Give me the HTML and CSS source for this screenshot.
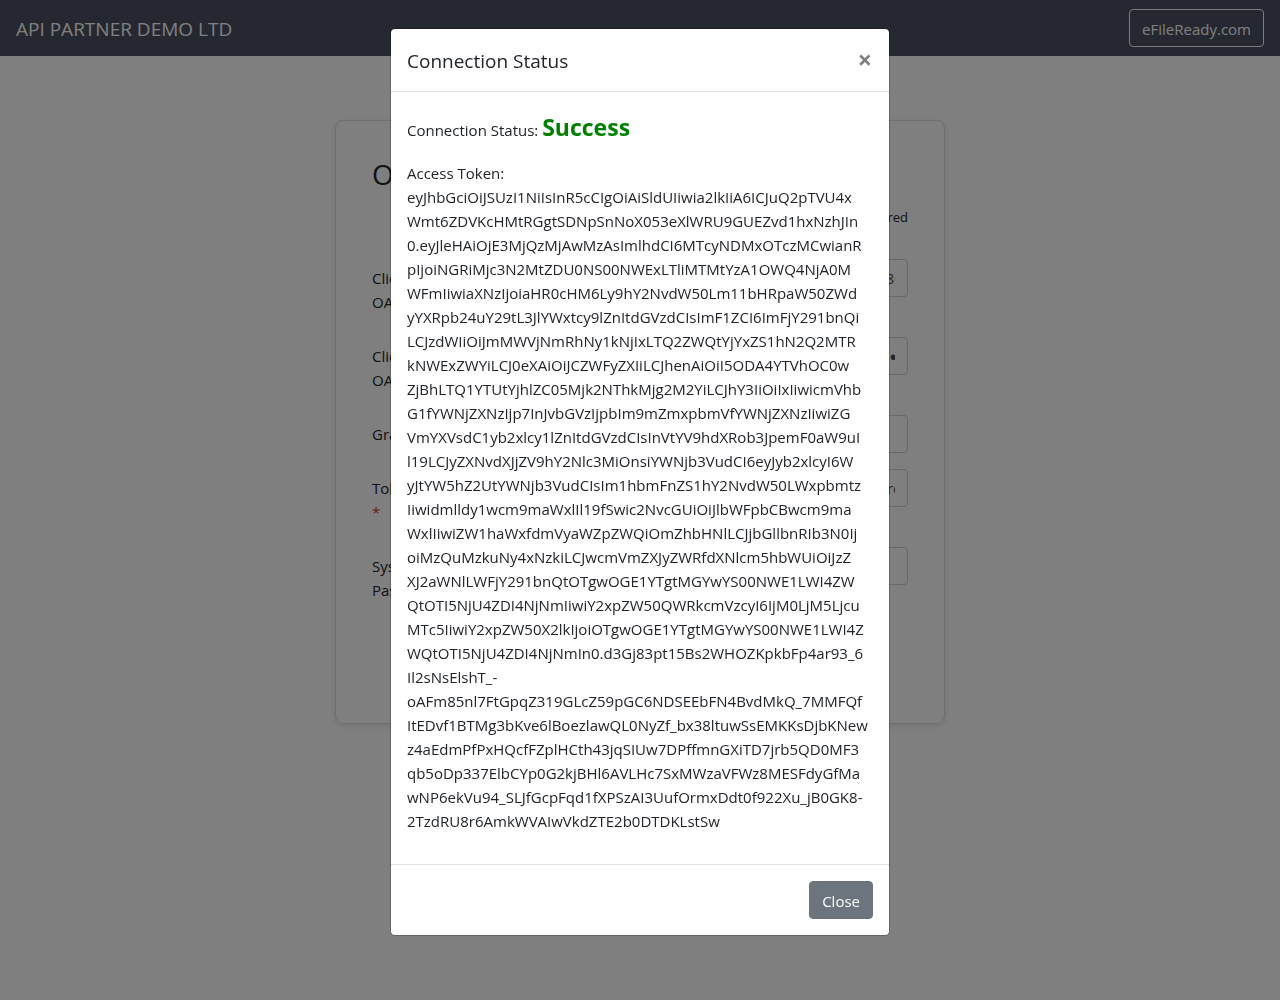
FILE: index.html
```html
<!DOCTYPE html>
<html lang="en">
<head>
    <meta charset="UTF-8">
    <meta name="viewport" content="width=device-width, initial-scale=1">
    <title>API PARTNER DEMO LTD</title>
    <link rel="stylesheet" href="styles.css">
</head>
<body>
    <nav class="navbar">
        <a class="navbar-brand" href="#">API PARTNER DEMO LTD</a>
        <a class="btn btn-outline" href="#">eFileReady.com</a>
    </nav>

    <main class="card">
        <h1>OAuth2 Connection</h1>
        <p class="required-note"><span class="required">*</span> Required</p>
        <form>
            <div class="form-row">
                <label for="clientId">Client ID from<br>OAuth2 <span class="required">*</span></label>
                <input type="text" id="clientId" value="9808a5a8-0f0a-45a5-b8ed-9296586f2018086804">
            </div>
            <div class="form-row">
                <label for="clientSecret">Client Secret from<br>OAuth2 <span class="required">*</span></label>
                <input type="password" id="clientSecret" value="9808a5a80f0a45a5b8ed929658698463f4c1d2e7a9b09808a5a80f0a45a5b8ed9296">
            </div>
            <div class="form-row">
                <label for="grantType">Grant Type <span class="required">*</span></label>
                <input type="text" id="grantType" value="client_credentials">
            </div>
            <div class="form-row">
                <label for="tokenUrl">Token Endpoint URL<br><span class="required">*</span></label>
                <input type="text" id="tokenUrl" value="https://access.multiple-integration.com/efile/rest">
            </div>
            <div class="form-row">
                <label for="systemPassword">System Account<br>Password</label>
                <input type="password" id="systemPassword">
            </div>
            <div class="form-actions">
                <button type="button" class="btn btn-secondary">Test Connection</button>
            </div>
        </form>
    </main>

    <div class="backdrop"></div>
    <div class="modal" role="dialog" aria-modal="true" aria-labelledby="modalTitle">
        <div class="modal-header">
            <h2 id="modalTitle">Connection Status</h2>
            <button type="button" class="close" aria-label="Dismiss">&times;</button>
        </div>
        <div class="modal-body">
            <p>Connection Status: <b class="success">Success</b></p>
            <p>Access Token:<br>
                eyJhbGciOiJSUzI1NiIsInR5cCIgOiAiSldUIiwia2lkIiA6ICJuQ2pTVU4x<br>
                Wmt6ZDVKcHMtRGgtSDNpSnNoX053eXlWRU9GUEZvd1hxNzhJIn<br>
                0.eyJleHAiOjE3MjQzMjAwMzAsImlhdCI6MTcyNDMxOTczMCwianR<br>
                pIjoiNGRiMjc3N2MtZDU0NS00NWExLTliMTMtYzA1OWQ4NjA0M<br>
                WFmIiwiaXNzIjoiaHR0cHM6Ly9hY2NvdW50Lm11bHRpaW50ZWd<br>
                yYXRpb24uY29tL3JlYWxtcy9lZnItdGVzdCIsImF1ZCI6ImFjY291bnQi<br>
                LCJzdWIiOiJmMWVjNmRhNy1kNjIxLTQ2ZWQtYjYxZS1hN2Q2MTR<br>
                kNWExZWYiLCJ0eXAiOiJCZWFyZXIiLCJhenAiOiI5ODA4YTVhOC0w<br>
                ZjBhLTQ1YTUtYjhlZC05Mjk2NThkMjg2M2YiLCJhY3IiOiIxIiwicmVhb<br>
                G1fYWNjZXNzIjp7InJvbGVzIjpbIm9mZmxpbmVfYWNjZXNzIiwiZG<br>
                VmYXVsdC1yb2xlcy1lZnItdGVzdCIsInVtYV9hdXRob3JpemF0aW9uI<br>
                l19LCJyZXNvdXJjZV9hY2Nlc3MiOnsiYWNjb3VudCI6eyJyb2xlcyI6W<br>
                yJtYW5hZ2UtYWNjb3VudCIsIm1hbmFnZS1hY2NvdW50LWxpbmtz<br>
                Iiwidmlldy1wcm9maWxlIl19fSwic2NvcGUiOiJlbWFpbCBwcm9ma<br>
                WxlIiwiZW1haWxfdmVyaWZpZWQiOmZhbHNlLCJjbGllbnRIb3N0Ij<br>
                oiMzQuMzkuNy4xNzkiLCJwcmVmZXJyZWRfdXNlcm5hbWUiOiJzZ<br>
                XJ2aWNlLWFjY291bnQtOTgwOGE1YTgtMGYwYS00NWE1LWI4ZW<br>
                QtOTI5NjU4ZDI4NjNmIiwiY2xpZW50QWRkcmVzcyI6IjM0LjM5Ljcu<br>
                MTc5IiwiY2xpZW50X2lkIjoiOTgwOGE1YTgtMGYwYS00NWE1LWI4Z<br>
                WQtOTI5NjU4ZDI4NjNmIn0.d3Gj83pt15Bs2WHOZKpkbFp4ar93_6<br>
                Il2sNsElshT_-<br>
                oAFm85nl7FtGpqZ319GLcZ59pGC6NDSEEbFN4BvdMkQ_7MMFQf<br>
                ItEDvf1BTMg3bKve6lBoezlawQL0NyZf_bx38ltuwSsEMKKsDjbKNew<br>
                z4aEdmPfPxHQcfFZplHCth43jqSIUw7DPffmnGXiTD7jrb5QD0MF3<br>
                qb5oDp337ElbCYp0G2kjBHl6AVLHc7SxMWzaVFWz8MESFdyGfMa<br>
                wNP6ekVu94_SLJfGcpFqd1fXPSzAI3UufOrmxDdt0f922Xu_jB0GK8-<br>
                2TzdRU8r6AmkWVAIwVkdZTE2b0DTDKLstSw</p>
        </div>
        <div class="modal-footer">
            <button type="button" class="btn btn-secondary">Close</button>
        </div>
    </div>
</body>
</html>
```
FILE: styles.css
```css
* {
    box-sizing: border-box;
}
body {
    margin: 0;
    font-family: "Segoe UI", "Open Sans", sans-serif;
    font-size: 15px;
    line-height: 24px;
    color: #212529;
    background-color: #fff;
}
h1, h2, p {
    margin: 0;
    font-weight: 400;
}
.navbar {
    display: flex;
    align-items: center;
    justify-content: space-between;
    height: 56px;
    padding: 0 16px;
    background-color: #4a5060;
}
.navbar-brand {
    font-size: 19px;
    line-height: 30px;
    padding-top: 2px;
    color: #fff;
    text-decoration: none;
}
.btn {
    display: inline-block;
    padding: 7px 12px 5px;
    border: 1px solid transparent;
    border-radius: 4px;
    font-family: inherit;
    font-size: 15px;
    line-height: 24px;
    color: #fff;
    text-decoration: none;
    cursor: pointer;
}
.btn-outline {
    border-color: #f8f9fa;
}
.btn-secondary {
    background-color: #6c757d;
    border-color: #6c757d;
}
.btn-secondary:hover {
    background-color: #5a6268;
}

/* Connection form */
.card {
    width: calc(100% - 32px);
    max-width: 610px;
    margin: 64px auto;
    padding: 36px;
    border: 1px solid #dfdfdf;
    border-radius: 8px;
    box-shadow: 0 2px 6px rgba(0, 0, 0, 0.1);
}
.card h1 {
    font-size: 28px;
    line-height: 34px;
}
.required-note {
    margin: 16px 0 32px;
    font-size: 13px;
    line-height: 20px;
    text-align: right;
}
.required {
    color: #dc3545;
}
.form-row {
    display: grid;
    grid-template-columns: 158px 1fr;
    gap: 30px;
    align-items: start;
    margin-bottom: 16px;
}
.form-row label {
    padding: 7px 0;
}
.form-row input {
    width: 100%;
    height: 38px;
    padding: 6px 12px;
    border: 1px solid #ced4da;
    border-radius: 4px;
    font-family: inherit;
    font-size: 15px;
    color: #495057;
    background-color: #fff;
}
.form-row input[type="password"] {
    font-size: 24px;
}
.form-actions {
    padding: 16px 0 8px;
    text-align: center;
}

/* Status dialog */
.backdrop {
    position: fixed;
    inset: 0;
    background-color: rgba(0, 0, 0, 0.5);
}
.modal {
    position: absolute;
    top: 28px;
    left: 0;
    right: 0;
    width: 100%;
    max-width: 500px;
    margin: 0 auto;
    border: 1px solid rgba(0, 0, 0, 0.2);
    border-radius: 5px;
    background-color: #fff;
    background-clip: padding-box;
}
.modal-header {
    display: flex;
    align-items: flex-start;
    justify-content: space-between;
    padding: 16px;
    border-bottom: 1px solid #dee2e6;
}
.modal-header h2 {
    font-size: 19px;
    line-height: 28px;
    padding-top: 2px;
}
.close {
    padding: 0 1px;
    border: 0;
    background: none;
    font-family: inherit;
    font-size: 25px;
    font-weight: 700;
    line-height: 28px;
    color: #7f7f7f;
    cursor: pointer;
}
.modal-body {
    padding: 17px 16px 15px;
}
.modal-body p {
    margin-bottom: 16px;
}
.success {
    font-size: 23px;
    line-height: 36px;
    color: #008000;
}
.modal-footer {
    display: flex;
    justify-content: flex-end;
    padding: 16px;
    border-top: 1px solid #dee2e6;
}
```
